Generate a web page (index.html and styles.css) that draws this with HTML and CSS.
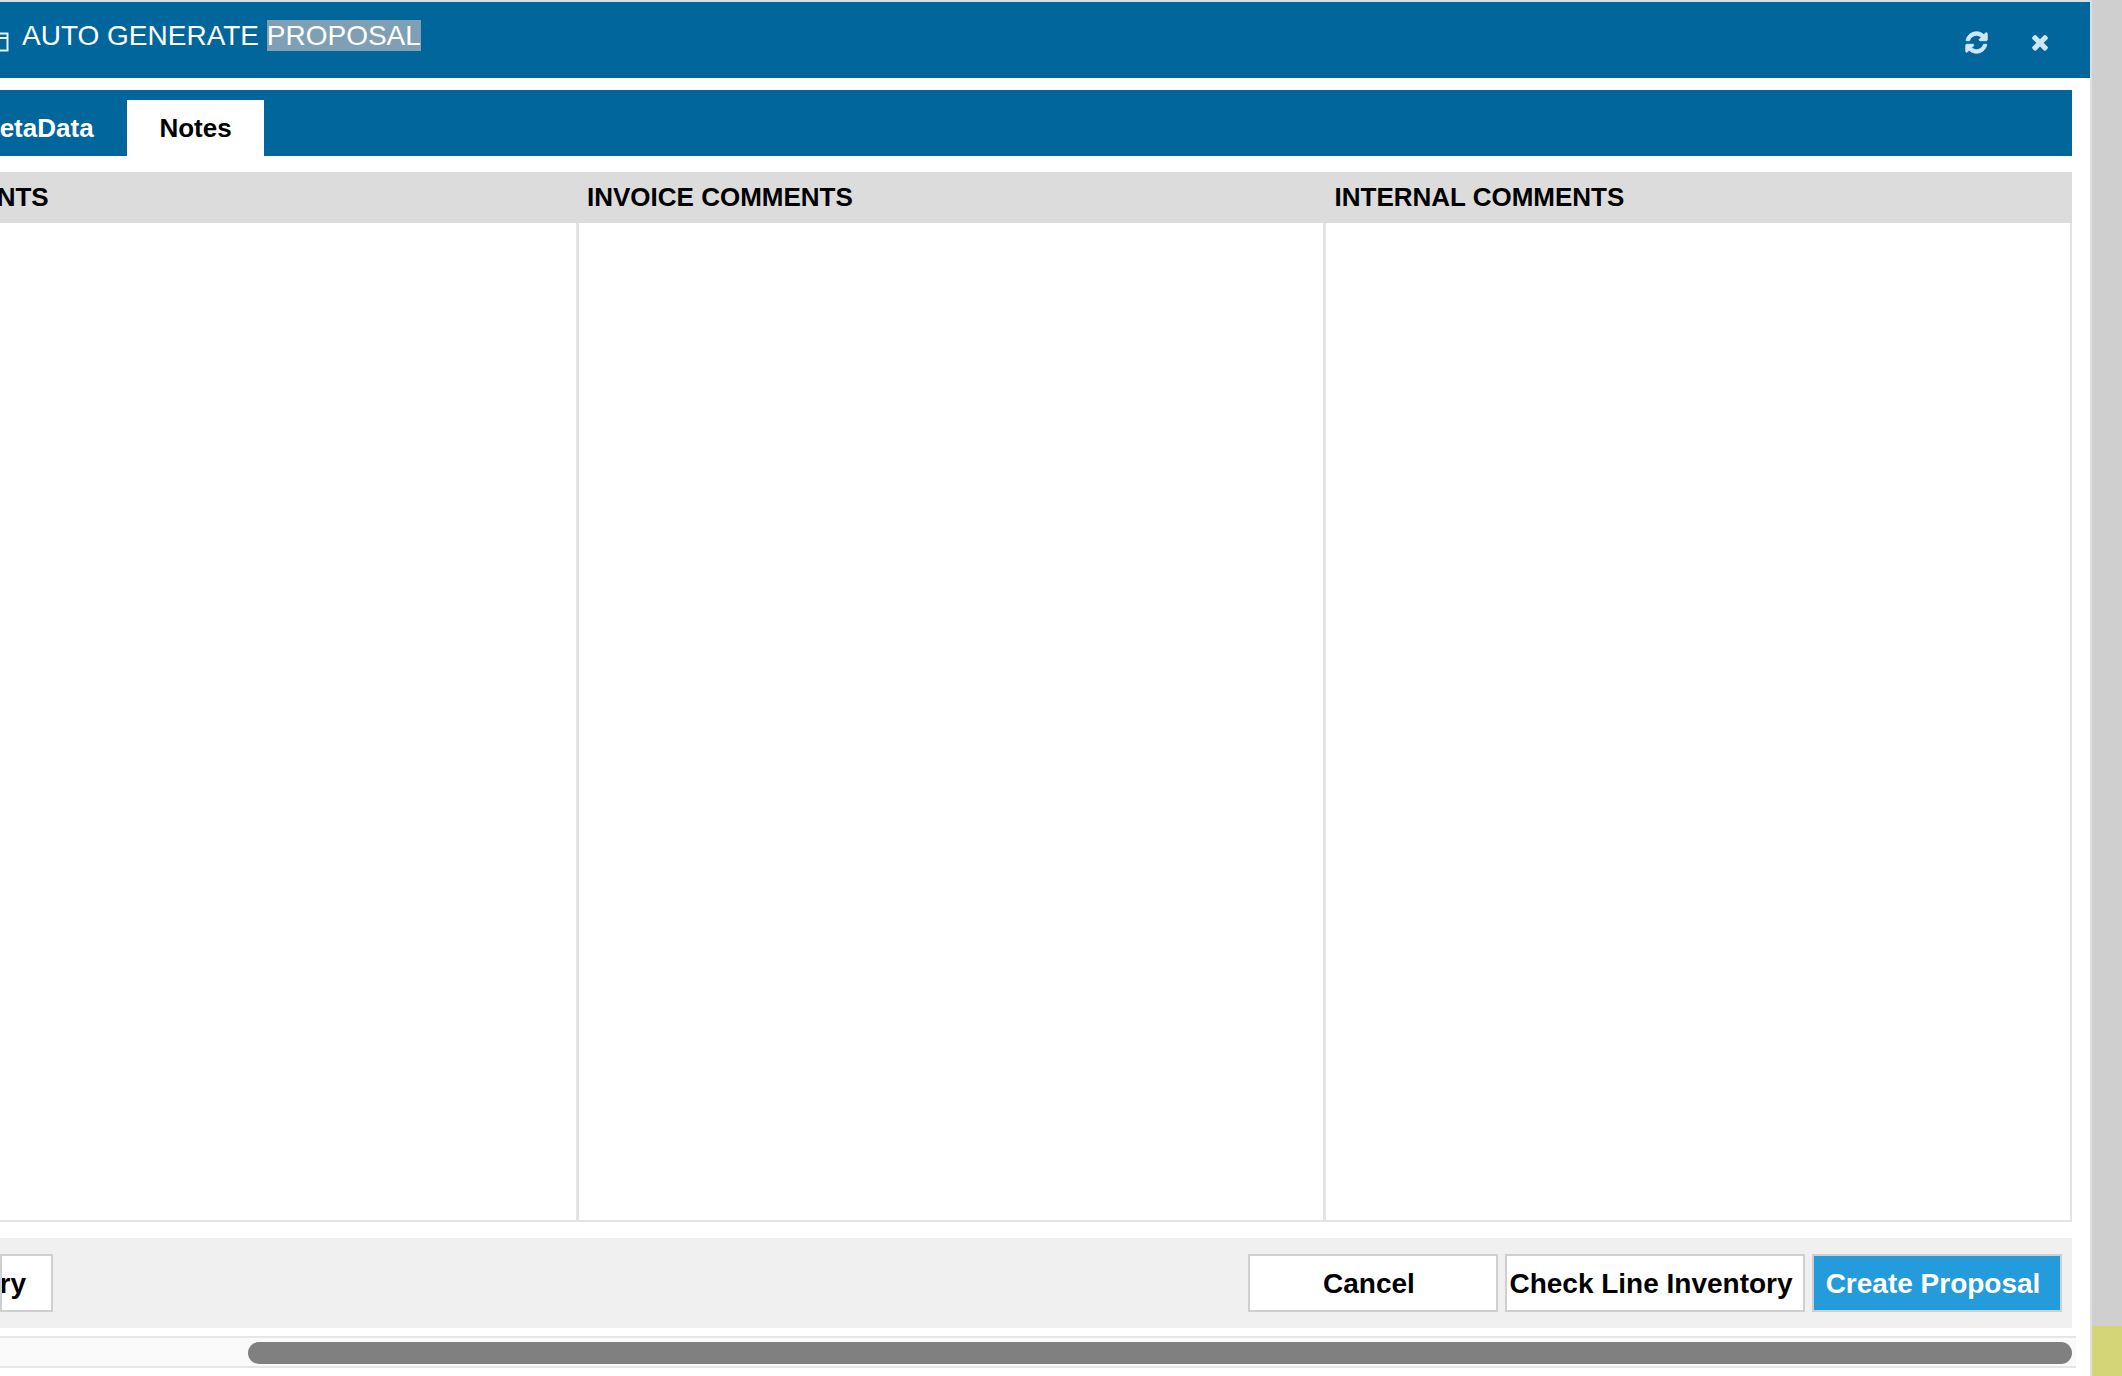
FILE: index.html
```html
<!DOCTYPE html>
<html lang="en">
<head>
<meta charset="utf-8">
<title>Auto Generate Proposal</title>
<link rel="stylesheet" href="styles.css">
</head>
<body>
<div class="screen">
  <main class="modal">
    <header class="modal-head">
      <div class="head-title">
        <svg class="win-icon" width="10" height="20" viewBox="0 0 10 20"><path d="M-8 1.500H7.500V18.500H-8ZM-8 6H7.500" fill="none" stroke="#eaf3f8" stroke-width="2"/></svg>
        <h1 class="title">AUTO GENERATE <span class="selected">PROPOSAL</span></h1>
      </div>
      <div class="head-actions">
        <svg class="icon-refresh" width="25" height="25" viewBox="0 0 1792 1792"><path fill="#cfe6f4" stroke="#cfe6f4" stroke-width="70" d="M1639 1056q0 5-1 7-64 268-268 434.500t-478 166.500q-146 0-282.500-55t-243.500-157l-129 129q-19 19-45 19t-45-19-19-45v-448q0-26 19-45t45-19h448q26 0 45 19t19 45-19 45l-137 137q71 66 161 102t187 36q134 0 250-65t186-179q11-17 53-117 8-23 30-23h192q13 0 22.500 9.500t9.500 22.500zm25-800v448q0 26-19 45t-45 19h-448q-26 0-45-19t-19-45 19-45l138-138q-148-137-349-137-134 0-250 65t-186 179q-11 17-53 117-8 23-30 23h-199q-13 0-22.500-9.500t-9.500-22.500v-7q65-268 270-434.500t480-166.500q146 0 284 55.500t245 156.500l130-129q19-19 45-19t45 19 19 45z"/></svg>
        <svg class="icon-close" width="24" height="24" viewBox="0 0 1792 1792"><path fill="#cfe6f4" d="M1490 1322q0 40-28 68l-136 136q-28 28-68 28t-68-28l-294-294-294 294q-28 28-68 28t-68-28l-136-136q-28-28-28-68t28-68l294-294-294-294q-28-28-28-68t28-68l136-136q28-28 68-28t68 28l294 294 294-294q28-28 68-28t68 28l136 136q28 28 28 68t-28 68l-294 294 294 294q28 28 28 68z"/></svg>
      </div>
    </header>
    <div class="modal-body">
      <nav class="tabs">
        <span class="tab">MetaData</span>
        <span class="tab tab-active">Notes</span>
      </nav>
      <section class="comments">
        <div class="comments-head">
          <div class="col-title col-first">COMMENTS</div>
          <div class="col-title col-mid">INVOICE COMMENTS</div>
          <div class="col-title col-last">INTERNAL COMMENTS</div>
        </div>
        <div class="comments-body">
          <div class="cell col-first"></div>
          <div class="cell col-mid"></div>
          <div class="cell col-last"></div>
        </div>
      </section>
      <footer class="actions">
        <button class="btn btn-left">Inventory</button>
        <div class="actions-right">
          <button class="btn btn-cancel">Cancel</button>
          <button class="btn btn-check">Check Line Inventory</button>
          <button class="btn btn-primary">Create Proposal</button>
        </div>
      </footer>
    </div>
    <div class="scroll-track"><div class="scroll-thumb"></div></div>
  </main>
  <aside class="backdrop"><div class="backdrop-accent"></div></aside>
</div>
</body>
</html>
```

FILE: styles.css
```css
html, body {
  margin: 0;
  padding: 0;
  height: 100%;
  overflow: hidden;
  background: #fff;
  font-family: "Liberation Sans", Arial, sans-serif;
}
.screen {
  display: flex;
  width: 2122px;
  height: 1376px;
  overflow: hidden;
}
.modal {
  width: 2090px;
  flex: none;
  display: flex;
  flex-direction: column;
  background: #fff;
  overflow: hidden;
}
.modal-head {
  height: 78px;
  box-sizing: border-box;
  flex: none;
  display: flex;
  justify-content: space-between;
  border-top: 2px solid #d5dfe5;
  background: #00669b;
  color: #fff;
}
.head-title {
  display: flex;
  align-items: flex-start;
}
.win-icon {
  flex: none;
  margin-top: 30px;
}
.title {
  margin: 18px 0 0 12px;
  font-size: 28px;
  font-weight: 400;
  line-height: 32px;
  white-space: nowrap;
}
.selected {
  background: #7f9fb5;
}
.head-actions {
  display: flex;
  align-items: flex-start;
  gap: 39px;
  padding: 28px 38px 0 0;
}
.modal-body {
  flex: none;
  margin-top: 12px;
  width: 2072px;
  display: flex;
  flex-direction: column;
}
.tabs {
  height: 66px;
  display: flex;
  align-items: flex-end;
  background: #00669b;
  overflow: hidden;
}
.tab {
  height: 56px;
  line-height: 56px;
  font-size: 26px;
  font-weight: 700;
  color: #fff;
  white-space: nowrap;
  flex: none;
  width: 149px;
  margin-left: -22px;
}
.tab-active {
  width: 137px;
  margin-left: 0;
  text-align: center;
  color: #000;
  background: #fff;
}
.comments {
  margin-top: 16px;
  width: 2072px;
  display: flex;
  flex-direction: column;
}
.comments-head {
  height: 51px;
  display: flex;
  background: #dcdcdc;
}
.col-title {
  box-sizing: border-box;
  font-size: 26px;
  font-weight: 700;
  line-height: 50px;
  white-space: nowrap;
  color: #000;
}
.col-first {
  width: 576px;
  flex: none;
}
.col-mid {
  width: 748px;
  flex: none;
}
.col-last {
  flex: 1;
}
.comments-head .col-first {
  overflow: hidden;
  text-indent: -103px;
}
.comments-head .col-mid {
  padding-left: 11px;
}
.comments-head .col-last {
  padding-left: 10.500px;
}
.comments-body {
  height: 999px;
  display: flex;
  box-sizing: border-box;
  border-bottom: 2px solid #e4e4e4;
  border-right: 2px solid #e4e4e4;
}
.cell {
  box-sizing: border-box;
}
.cell.col-first {
  border-right: 3px solid #e4e4e4;
  width: 579px;
}
.cell.col-mid {
  border-right: 3px solid #e4e4e4;
  width: 747px;
}
.actions {
  margin-top: 16px;
  height: 90px;
  background: #f0f0f0;
  display: flex;
  align-items: center;
  justify-content: space-between;
  padding-right: 10px;
  box-sizing: border-box;
}
.actions-right {
  display: flex;
  gap: 7px;
}
.btn {
  height: 58px;
  box-sizing: border-box;
  border: 2px solid #cfcfcf;
  background: #fff;
  color: #000;
  font-family: inherit;
  font-size: 28px;
  font-weight: 700;
  padding: 2px 8px 0 0;
  white-space: nowrap;
}
.btn-left {
  width: 53px;
  display: flex;
  align-items: center;
  justify-content: flex-end;
  overflow: hidden;
  padding-right: 25px;
}
.btn-cancel {
  width: 250px;
}
.btn-check {
  width: 300px;
}
.btn-primary {
  width: 250px;
  background: #249bdb;
  color: #fff;
}
.scroll-track {
  margin-top: 8px;
  width: 2076px;
  height: 32px;
  box-sizing: border-box;
  border-top: 2px solid #e6e6e6;
  border-bottom: 2px solid #e6e6e6;
  background: #fafafa;
  padding: 4px 4px 4px 248px;
}
.scroll-thumb {
  height: 22px;
  border-radius: 11px;
  background: #808080;
}
.backdrop {
  flex: 1;
  display: flex;
  flex-direction: column;
  justify-content: flex-end;
  border-left: 2px solid #dedede;
  background: #cfcfcf;
}
.backdrop-accent {
  height: 50px;
  background: #d3d576;
}
```
